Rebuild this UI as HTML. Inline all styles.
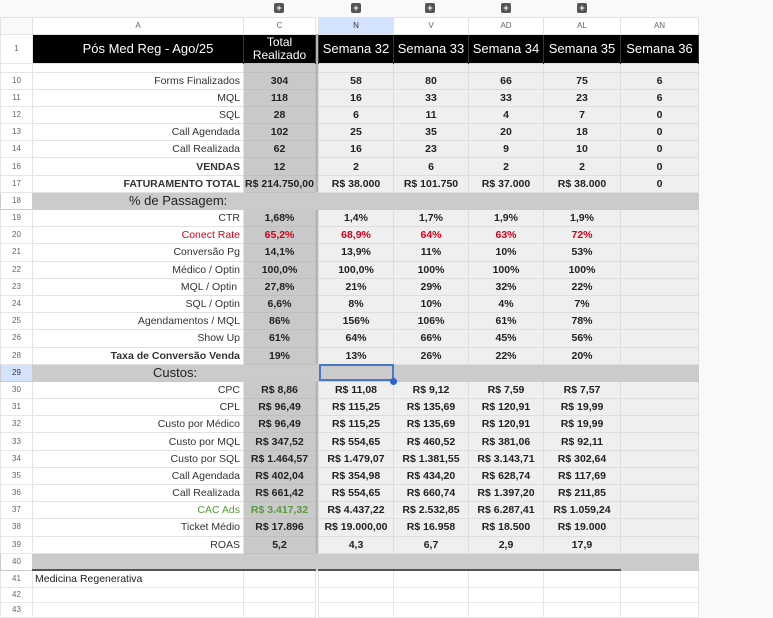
<!DOCTYPE html>
<html><head><meta charset="utf-8">
<style>
*{margin:0;padding:0;box-sizing:border-box}
body{width:773px;height:607px;overflow:hidden;background:#f8f9fa;font-family:"Liberation Sans",sans-serif;position:relative}
table{position:absolute;left:0;top:0;border-collapse:collapse;table-layout:fixed;width:698px}
td{border:1px solid #e2e2e2;font-size:10.5px;color:#222;white-space:nowrap;overflow:hidden;padding:0 2px;text-align:center;font-weight:bold;line-height:14px}
td.n{background:#fff;color:#666;font-size:8px;font-weight:normal;text-align:center;border-color:#e6e6e6}
td.a{background:#fff;text-align:right;font-weight:normal;color:#333;padding-right:3px}
td.c{background:#c9c9c9;border-color:#c0c0c0}
td.d{background:#efefef;border-color:#dedede}
td.sep{background:#b5b5b5;border:none;padding:0}
tr.top td{background:#f8f9fa;border:none}
tr.ch td{background:#fff;color:#666;font-size:8px;font-weight:normal;border-color:#e2e2e2}
tr.h td{background:#000;color:#fff;font-size:13px;font-weight:normal;border:none;border-right:1px solid #333;line-height:13px;padding:0}
tr.s td{background:#cbcbcb;border-color:#cbcbcb}
tr.s td.n{background:#fff}
tr.s td.lab{text-align:left;font-weight:normal;font-size:13px;color:#222}
.r{color:#d0021b!important}
.g{color:#5a9a3c!important}
tr.w td{background:#fff;border-color:#e6e6e6;font-weight:normal}
tr.x{height:17.2px}
.plus{position:absolute;top:3px;width:10px;height:10px;background:#555;border-radius:2px;color:#fff;font-size:9px;line-height:10px;text-align:center;font-weight:bold}
</style></head><body>
<table>
<colgroup><col style="width:32px"><col style="width:211px"><col style="width:72px"><col style="width:3px"><col style="width:75px"><col style="width:75px"><col style="width:75px"><col style="width:77px"><col style="width:78px"></colgroup>
<tr class="top" style="height:17px"><td></td><td></td><td></td><td class="sep"></td><td></td><td></td><td></td><td></td><td></td></tr>
<tr class="ch" style="height:17px"><td style="background:#f8f9fa"></td><td>A</td><td>C</td><td class="sep"></td><td style="background:#d3e3fd;color:#333">N</td><td>V</td><td>AD</td><td>AL</td><td>AN</td></tr>
<tr class="h" style="height:29px"><td class="n" style="background:#fff;color:#666;font-size:8px;border:1px solid #e6e6e6">1</td><td style="text-align:center;padding-left:20px">Pós Med Reg - Ago/25</td><td style="font-size:12px;line-height:13px">Total<br>Realizado</td><td class="sep" style="background:#b5b5b5"></td><td>Semana 32</td><td>Semana 33</td><td>Semana 34</td><td>Semana 35</td><td>Semana 36</td></tr>
<tr style="height:9px"><td class="n"></td><td class="a"></td><td class="c"></td><td class="sep"></td><td class="d"></td><td class="d"></td><td class="d"></td><td class="d"></td><td class="d"></td></tr>
<tr class="x"><td class="n">10</td><td class="a">Forms Finalizados</td><td class="c">304</td><td class="sep"></td><td class="d">58</td><td class="d">80</td><td class="d">66</td><td class="d">75</td><td class="d">6</td></tr>
<tr class="x"><td class="n">11</td><td class="a">MQL</td><td class="c">118</td><td class="sep"></td><td class="d">16</td><td class="d">33</td><td class="d">33</td><td class="d">23</td><td class="d">6</td></tr>
<tr class="x"><td class="n">12</td><td class="a">SQL</td><td class="c">28</td><td class="sep"></td><td class="d">6</td><td class="d">11</td><td class="d">4</td><td class="d">7</td><td class="d">0</td></tr>
<tr class="x"><td class="n">13</td><td class="a">Call Agendada</td><td class="c">102</td><td class="sep"></td><td class="d">25</td><td class="d">35</td><td class="d">20</td><td class="d">18</td><td class="d">0</td></tr>
<tr class="x"><td class="n">14</td><td class="a">Call Realizada</td><td class="c">62</td><td class="sep"></td><td class="d">16</td><td class="d">23</td><td class="d">9</td><td class="d">10</td><td class="d">0</td></tr>
<tr class="x"><td class="n">16</td><td class="a" style="font-weight:bold">VENDAS</td><td class="c">12</td><td class="sep"></td><td class="d">2</td><td class="d">6</td><td class="d">2</td><td class="d">2</td><td class="d">0</td></tr>
<tr class="x"><td class="n">17</td><td class="a" style="font-weight:bold">FATURAMENTO TOTAL</td><td class="c" style="padding:0">R$ 214.750,00</td><td class="sep"></td><td class="d">R$ 38.000</td><td class="d">R$ 101.750</td><td class="d">R$ 37.000</td><td class="d">R$ 38.000</td><td class="d">0</td></tr>
<tr class="s x"><td class="n">18</td><td class="lab" colspan="2" style="padding-left:96px">% de Passagem:</td><td class="sep"></td><td></td><td></td><td></td><td></td><td></td></tr>
<tr class="x"><td class="n">19</td><td class="a">CTR</td><td class="c">1,68%</td><td class="sep"></td><td class="d">1,4%</td><td class="d">1,7%</td><td class="d">1,9%</td><td class="d">1,9%</td><td class="d"></td></tr>
<tr class="x"><td class="n">20</td><td class="a r">Conect Rate</td><td class="c r">65,2%</td><td class="sep"></td><td class="d r">68,9%</td><td class="d r">64%</td><td class="d r">63%</td><td class="d r">72%</td><td class="d"></td></tr>
<tr class="x"><td class="n">21</td><td class="a">Conversão Pg</td><td class="c">14,1%</td><td class="sep"></td><td class="d">13,9%</td><td class="d">11%</td><td class="d">10%</td><td class="d">53%</td><td class="d"></td></tr>
<tr class="x"><td class="n">22</td><td class="a">Médico / Optin</td><td class="c">100,0%</td><td class="sep"></td><td class="d">100,0%</td><td class="d">100%</td><td class="d">100%</td><td class="d">100%</td><td class="d"></td></tr>
<tr class="x"><td class="n">23</td><td class="a">MQL / Optin&nbsp;</td><td class="c">27,8%</td><td class="sep"></td><td class="d">21%</td><td class="d">29%</td><td class="d">32%</td><td class="d">22%</td><td class="d"></td></tr>
<tr class="x"><td class="n">24</td><td class="a">SQL / Optin</td><td class="c">6,6%</td><td class="sep"></td><td class="d">8%</td><td class="d">10%</td><td class="d">4%</td><td class="d">7%</td><td class="d"></td></tr>
<tr class="x"><td class="n">25</td><td class="a">Agendamentos / MQL</td><td class="c">86%</td><td class="sep"></td><td class="d">156%</td><td class="d">106%</td><td class="d">61%</td><td class="d">78%</td><td class="d"></td></tr>
<tr class="x"><td class="n">26</td><td class="a">Show Up</td><td class="c">61%</td><td class="sep"></td><td class="d">64%</td><td class="d">66%</td><td class="d">45%</td><td class="d">56%</td><td class="d"></td></tr>
<tr class="x"><td class="n">28</td><td class="a" style="font-weight:bold">Taxa de Conversão Venda</td><td class="c">19%</td><td class="sep"></td><td class="d">13%</td><td class="d">26%</td><td class="d">22%</td><td class="d">20%</td><td class="d"></td></tr>
<tr class="s x"><td class="n" style="background:#d3e3fd!important;color:#333">29</td><td class="lab" colspan="2" style="padding-left:120px">Custos:</td><td class="sep"></td><td style="outline:2px solid #4a78c8;outline-offset:-2px"></td><td></td><td></td><td></td><td></td></tr>
<tr class="x"><td class="n">30</td><td class="a">CPC</td><td class="c">R$ 8,86</td><td class="sep"></td><td class="d">R$ 11,08</td><td class="d">R$ 9,12</td><td class="d">R$ 7,59</td><td class="d">R$ 7,57</td><td class="d"></td></tr>
<tr class="x"><td class="n">31</td><td class="a">CPL</td><td class="c">R$ 96,49</td><td class="sep"></td><td class="d">R$ 115,25</td><td class="d">R$ 135,69</td><td class="d">R$ 120,91</td><td class="d">R$ 19,99</td><td class="d"></td></tr>
<tr class="x"><td class="n">32</td><td class="a">Custo por Médico</td><td class="c">R$ 96,49</td><td class="sep"></td><td class="d">R$ 115,25</td><td class="d">R$ 135,69</td><td class="d">R$ 120,91</td><td class="d">R$ 19,99</td><td class="d"></td></tr>
<tr class="x"><td class="n">33</td><td class="a">Custo por MQL</td><td class="c">R$ 347,52</td><td class="sep"></td><td class="d">R$ 554,65</td><td class="d">R$ 460,52</td><td class="d">R$ 381,06</td><td class="d">R$ 92,11</td><td class="d"></td></tr>
<tr class="x"><td class="n">34</td><td class="a">Custo por SQL</td><td class="c" style="padding:0">R$ 1.464,57</td><td class="sep"></td><td class="d" style="padding:0">R$ 1.479,07</td><td class="d" style="padding:0">R$ 1.381,55</td><td class="d" style="padding:0">R$ 3.143,71</td><td class="d">R$ 302,64</td><td class="d"></td></tr>
<tr class="x"><td class="n">35</td><td class="a">Call Agendada</td><td class="c">R$ 402,04</td><td class="sep"></td><td class="d">R$ 354,98</td><td class="d">R$ 434,20</td><td class="d">R$ 628,74</td><td class="d">R$ 117,69</td><td class="d"></td></tr>
<tr class="x"><td class="n">36</td><td class="a">Call Realizada</td><td class="c">R$ 661,42</td><td class="sep"></td><td class="d">R$ 554,65</td><td class="d">R$ 660,74</td><td class="d" style="padding:0">R$ 1.397,20</td><td class="d">R$ 211,85</td><td class="d"></td></tr>
<tr class="x"><td class="n">37</td><td class="a g">CAC Ads</td><td class="c g" style="padding:0">R$ 3.417,32</td><td class="sep"></td><td class="d" style="padding:0">R$ 4.437,22</td><td class="d" style="padding:0">R$ 2.532,85</td><td class="d" style="padding:0">R$ 6.287,41</td><td class="d" style="padding:0">R$ 1.059,24</td><td class="d"></td></tr>
<tr class="x"><td class="n">38</td><td class="a">Ticket Médio</td><td class="c">R$ 17.896</td><td class="sep"></td><td class="d" style="padding:0">R$ 19.000,00</td><td class="d">R$ 16.958</td><td class="d">R$ 18.500</td><td class="d">R$ 19.000</td><td class="d"></td></tr>
<tr class="x"><td class="n">39</td><td class="a">ROAS</td><td class="c">5,2</td><td class="sep"></td><td class="d">4,3</td><td class="d">6,7</td><td class="d">2,9</td><td class="d">17,9</td><td class="d"></td></tr>
<tr class="s x"><td class="n">40</td><td style="border-bottom:2px solid #555"></td><td style="border-bottom:2px solid #555"></td><td class="sep"></td><td style="border-bottom:2px solid #555"></td><td style="border-bottom:2px solid #555"></td><td style="border-bottom:2px solid #555"></td><td style="border-bottom:2px solid #555"></td><td></td></tr>
<tr class="w x"><td class="n">41</td><td style="text-align:left;color:#222">Medicina Regenerativa</td><td></td><td class="sep"></td><td></td><td></td><td></td><td></td><td></td></tr>
<tr class="w" style="height:15px"><td class="n">42</td><td></td><td></td><td class="sep"></td><td></td><td></td><td></td><td></td><td></td></tr>
<tr class="w" style="height:15px"><td class="n">43</td><td></td><td></td><td class="sep"></td><td></td><td></td><td></td><td></td><td></td></tr>
</table>
<div class="plus" style="left:274px">+</div>
<div class="plus" style="left:351px">+</div>
<div class="plus" style="left:425px">+</div>
<div class="plus" style="left:501px">+</div>
<div class="plus" style="left:577px">+</div>
<div style="position:absolute;left:390px;top:378px;width:7px;height:7px;border-radius:50%;background:#2f63c9"></div>
</body></html>
